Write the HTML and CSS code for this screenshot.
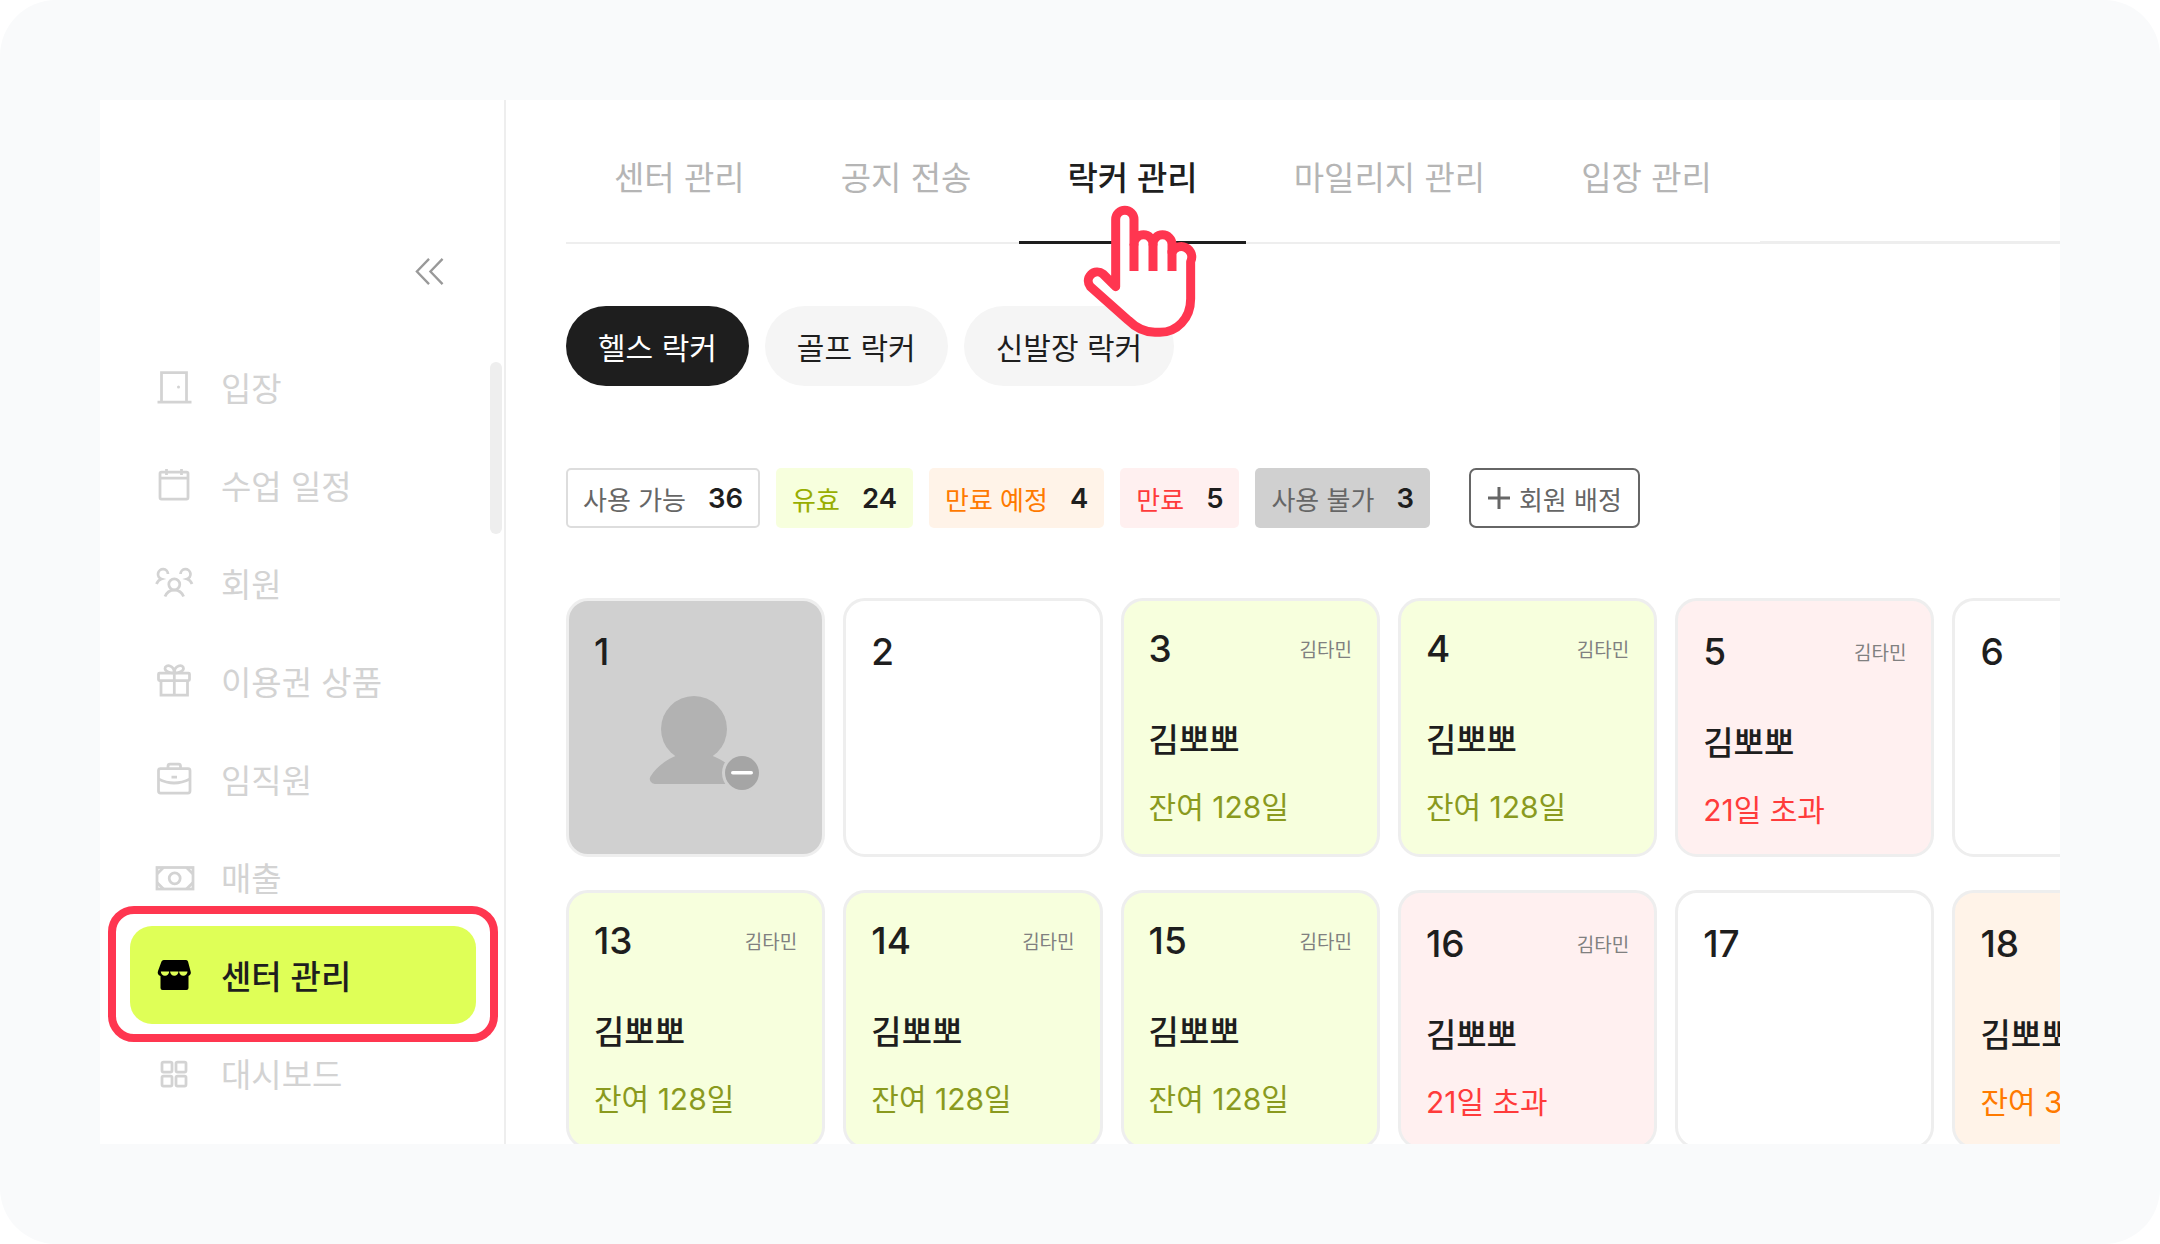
FILE: index.html
```html
<!DOCTYPE html>
<html lang="ko">
<head>
<meta charset="utf-8">
<title>락커 관리</title>
<link rel="stylesheet" href="styles.css">
</head>
<body>
<div class="frame">
  <div class="panel">
    <aside class="sidebar">
      <div class="collapse-row">
        <svg class="collapse" viewBox="0 0 30 30"><path d="M14.5 1 1.5 14.5 14.5 28M29 1 16 14.5 29 28"/></svg>
      </div>
      <div class="scrollbar"></div>
      <nav class="nav">
        <a class="nav-item"><svg class="ico" viewBox="0 0 36 36"><path d="M4.5 33V3.5h25V33M.5 33h34"/><circle class="dot" cx="21.5" cy="18" r="1.5"/></svg>입장</a>
        <a class="nav-item"><svg class="ico" viewBox="0 0 36 36"><rect x="3" y="5" width="28" height="27" rx="1.5"/><path d="M3 11h28M9.5 2v6M24.5 2v6"/></svg>수업 일정</a>
        <a class="nav-item"><svg class="ico" viewBox="0 0 36 36"><circle cx="17.3" cy="19.3" r="5.5"/><path d="M8 31.5c1.5-4 5-6.500 9.300-6.500s7.800 2.500 9.300 6.500M-.5 19Q1 15 4.500 14A5 5 0 1 1 11 9M35 19Q33.500 15 30 14A5 5 0 1 0 23.500 9"/></svg>회원</a>
        <a class="nav-item"><svg class="ico" viewBox="0 0 36 36"><rect x="1.500" y="10" width="31" height="7.500" rx="1"/><path d="M4 17.500V32h26.500V17.500M17.300 10v22M17.300 10C12 10 8 8 8 5.500 8 3 11 2 13 3c2.500 1 4.300 4 4.300 7 0-3 1.700-6 4.200-7 2.500-1 5 0 5 2.500 0 2.500-4.500 4.500-9.200 4.500"/></svg>이용권 상품</a>
        <a class="nav-item"><svg class="ico" viewBox="0 0 36 36"><rect x="1.500" y="7.500" width="31.500" height="24.500" rx="2"/><path d="M11 7.500V5a2 2 0 0 1 2-2h8.500a2 2 0 0 1 2 2v2.500M1.500 18Q17 26 33 18M14.500 16H20"/></svg>임직원</a>
        <a class="nav-item"><svg class="ico" viewBox="0 0 36 36"><rect x="0" y="8.500" width="36" height="21.500"/><circle cx="17.700" cy="19.300" r="5.500"/><path d="M0 15l6.500-6.500M0 23.500L6.500 30M36 15l-6.500-6.500M36 23.500L29.500 30"/></svg>매출</a>
        <a class="nav-item nav-item--active"><svg class="ico ico--solid" viewBox="0 0 36 36"><path d="M7 3h22a2 2 0 0 1 2 1.500L33.500 14a4 4 0 0 1-2 5v12a2 2 0 0 1-2 2h-24a2 2 0 0 1-2-2V19A4 4 0 0 1 1 14L4.500 4.500A2.500 2.500 0 0 1 7 3z"/><path class="scallop" d="M3.800 14.500h8.400a4.200 4.200 0 0 1-8.400 0zM13.100 14.500h8.400a4.200 4.200 0 0 1-8.400 0zM22.100 14.500h8.400a4.200 4.200 0 0 1-8.400 0z"/></svg>센터 관리<span class="callout"></span></a>
        <a class="nav-item"><svg class="ico" viewBox="0 0 36 36"><rect x="5" y="7" width="10" height="10" rx="1.500"/><rect x="19" y="7" width="10" height="10" rx="1.500"/><rect x="5" y="21" width="10" height="10" rx="1.500"/><rect x="19" y="21" width="10" height="10" rx="1.500"/></svg>대시보드</a>
      </nav>
    </aside>
    <main class="main">
      <div class="tabs">
        <a class="tab">센터 관리</a>
        <a class="tab">공지 전송</a>
        <a class="tab tab--active">락커 관리</a>
        <a class="tab">마일리지 관리</a>
        <a class="tab">입장 관리</a>
      </div>
      <div class="pills">
        <a class="pill pill--active">헬스 락커</a>
        <a class="pill">골프 락커</a>
        <a class="pill">신발장 락커</a>
      </div>
      <div class="badges">
        <span class="badge badge--free">사용 가능<b>36</b></span>
        <span class="badge badge--valid">유효<b>24</b></span>
        <span class="badge badge--soon">만료 예정<b>4</b></span>
        <span class="badge badge--over">만료<b>5</b></span>
        <span class="badge badge--off">사용 불가<b>3</b></span>
        <button class="assign"><svg class="plus" viewBox="0 0 24 24"><path d="M12 1v22M1 12h22"/></svg>회원 배정</button>
      </div>
      <div class="grid">
        <div class="card card--off">
          <div class="card-head"><span class="num">1</span></div>
          <svg class="avatar" viewBox="0 0 130 110"><circle class="av-fill" cx="54" cy="39" r="33"/><path class="av-fill" d="M15 94a5 5 0 0 1-4.500-7.500C16 77 27 69 38 65h32c8 3 14 6 18 10v19z"/><circle class="av-ring" cx="102" cy="83" r="20"/><circle class="av-dot" cx="102" cy="83" r="17"/><rect class="av-bar" x="91" y="81" width="22" height="3.500" rx="1.750"/></svg>
        </div>
        <div class="card"><div class="card-head"><span class="num">2</span></div></div>
        <div class="card card--valid"><div class="card-head card-head--up"><span class="num">3</span><span class="owner">김타민</span></div><div class="name">김뽀뽀</div><div class="status">잔여 128일</div></div>
        <div class="card card--valid"><div class="card-head card-head--up"><span class="num">4</span><span class="owner">김타민</span></div><div class="name">김뽀뽀</div><div class="status">잔여 128일</div></div>
        <div class="card card--over"><div class="card-head"><span class="num">5</span><span class="owner">김타민</span></div><div class="name">김뽀뽀</div><div class="status">21일 초과</div></div>
        <div class="card"><div class="card-head"><span class="num">6</span></div></div>
        <div class="card card--valid"><div class="card-head card-head--up"><span class="num">13</span><span class="owner">김타민</span></div><div class="name">김뽀뽀</div><div class="status">잔여 128일</div></div>
        <div class="card card--valid"><div class="card-head card-head--up"><span class="num">14</span><span class="owner">김타민</span></div><div class="name">김뽀뽀</div><div class="status">잔여 128일</div></div>
        <div class="card card--valid"><div class="card-head card-head--up"><span class="num">15</span><span class="owner">김타민</span></div><div class="name">김뽀뽀</div><div class="status">잔여 128일</div></div>
        <div class="card card--over"><div class="card-head"><span class="num">16</span><span class="owner">김타민</span></div><div class="name">김뽀뽀</div><div class="status">21일 초과</div></div>
        <div class="card"><div class="card-head"><span class="num">17</span></div></div>
        <div class="card card--soon"><div class="card-head"><span class="num">18</span></div><div class="name">김뽀뽀</div><div class="status">잔여 32일</div></div>
      </div>
    </main>
  </div>
  <svg class="hand" viewBox="240 215 360 415"><path class="hand-body" d="M347 469V267a27.500 27.500 0 0 1 55 0v75a28.500 28.500 0 0 1 57 0a28.500 28.500 0 0 1 57 0v24a28 28 0 0 1 56 28V505C572 565 530 606 480 606H465C430 606 405 590 385 570L271 469A27 27 0 0 1 309 431z"/><path class="hand-line" d="M402 340V422M459 340V422M516 360V422"/></svg>
</div>
</body>
</html>
```
FILE: styles.css
```css
* { box-sizing: border-box; }
html, body { margin: 0; padding: 0; background: #fff; }
body { width: 2160px; height: 1244px; overflow: hidden; font-family: Inter, "Noto Sans CJK KR", sans-serif; color: #1e1e1e; }

.frame { position: relative; width: 2160px; height: 1244px; padding: 100px; background: #f9fafb; border-radius: 56px; }
.panel { display: flex; height: 1044px; background: #fff; overflow: hidden; }

/* sidebar */
.sidebar { position: relative; flex: none; width: 406px; border-right: 2px solid #eee; padding: 158px 0 0 30px; }
.collapse-row { display: flex; justify-content: flex-end; padding-right: 60px; height: 28px; margin-bottom: 52px; }
.collapse { width: 29px; height: 28px; fill: none; stroke: #999; stroke-width: 2.5; }
.scrollbar { position: absolute; left: 390px; top: 262px; width: 12px; height: 172px; border-radius: 6px; background: #eee; }
.nav { display: flex; flex-direction: column; width: 346px; }
.nav-item { position: relative; display: flex; align-items: center; gap: 28px; height: 98px; padding-left: 27px; font-size: 33px; color: #d3d3d3; }
.nav-item--active { background: #dfff57; border-radius: 22px; color: #1e1e1e; font-weight: 500; }
.callout { position: absolute; left: -22px; right: -22px; top: -20px; bottom: -18px; border: 8px solid #ff3650; border-radius: 26px; }
.ico { flex: none; width: 36px; height: 36px; fill: none; stroke: #d3d3d3; stroke-width: 2.75; overflow: visible; }
.ico .dot { fill: #d3d3d3; stroke: none; }
.ico--solid { fill: #000; stroke: none; }
.ico--solid .scallop { fill: #dfff57; }

/* main */
.main { flex: 1; min-width: 0; padding-left: 60px; overflow: hidden; }
.tabs { display: flex; height: 144px; border-bottom: 2px solid #eee; }
.tabs::after { content: ""; margin-left: auto; margin-bottom: 0; width: 302px; box-shadow: inset 0 -1px 0 #eee; }
.tab { padding: 54px 48px 0; font-size: 33px; line-height: 48px; color: #b5b5b5; white-space: nowrap; }
.tab--active { margin-bottom: -2px; color: #1e1e1e; font-weight: 500; box-shadow: inset 0 -3px 0 #1e1e1e; }

.pills { display: flex; gap: 16px; margin-top: 62px; }
.pill { display: flex; align-items: center; height: 80px; padding: 0 32px; border-radius: 40px; background: #f5f5f5; font-size: 30px; color: #1e1e1e; }
.pill--active { background: #1e1e1e; color: #fff; }

.badges { display: flex; gap: 16px; margin-top: 82px; height: 60px; }
.badge { display: flex; align-items: center; gap: 22px; padding: 0 16px; border-radius: 5px; font-size: 26px; white-space: nowrap; }
.badge b { font-size: 27.500px; font-weight: 600; color: #1e1e1e; }
.badge--free { border: 2.500px solid #ddd; color: #666; padding: 0 15px; }
.badge--valid { background: #f7ffdd; color: #98ae00; }
.badge--soon { background: #fff3e8; color: #ff7a00; }
.badge--over { background: #fff0f0; color: #ff3b3b; }
.badge--off { background: #d0d0d0; color: #666; }
.assign { display: flex; align-items: center; gap: 8px; height: 60px; margin-left: 23px; padding: 0 16px; border: 2.500px solid #666; border-radius: 7px; background: #fff; color: #666; font: inherit; font-size: 26px; white-space: nowrap; }
.plus { width: 24px; height: 24px; fill: none; stroke: #666; stroke-width: 3; }

.grid { display: grid; grid-template-columns: repeat(6, 259.300px); column-gap: 18px; row-gap: 33px; margin-top: 70px; }
.card { height: 259px; padding: 26px 25px 0; border: 3px solid #eee; border-radius: 22px; background: #fff; }
.card--off { background: #d0d0d0; }
.card--valid { background: #f7ffdd; }
.card--over { background: #fff0f0; }
.card--soon { background: #fff3e8; }
.card-head { display: flex; justify-content: space-between; align-items: center; height: 48px; }
.card-head--up { margin-top: -3px; margin-bottom: 3px; }
.num { font-size: 37px; font-weight: 500; color: #1e1e1e; }
.owner { font-size: 19px; color: #808080; }
.name { margin-top: 45px; font-size: 33px; line-height: 46px; font-weight: 500; color: #1e1e1e; white-space: nowrap; }
.status { margin-top: 24px; font-size: 30px; line-height: 40px; white-space: nowrap; }
.card--valid .status { color: #8a9a1e; }
.card--over .status { color: #ff3b3b; }
.card--soon .status { color: #ff7a00; }
.avatar { display: block; width: 130px; height: 110px; margin: 15px 0 0 46px; }
.av-fill { fill: #b2b2b2; }
.av-ring { fill: #d0d0d0; }
.av-dot { fill: #a5a5a5; }
.av-bar { fill: #fff; }

.hand { position: absolute; left: 1080px; top: 202px; width: 120px; height: 138.300px; overflow: visible; }
.hand-body { fill: #fff; stroke: #ff3650; stroke-width: 27; stroke-linejoin: round; }
.hand-line { fill: none; stroke: #ff3650; stroke-width: 27; }
```
